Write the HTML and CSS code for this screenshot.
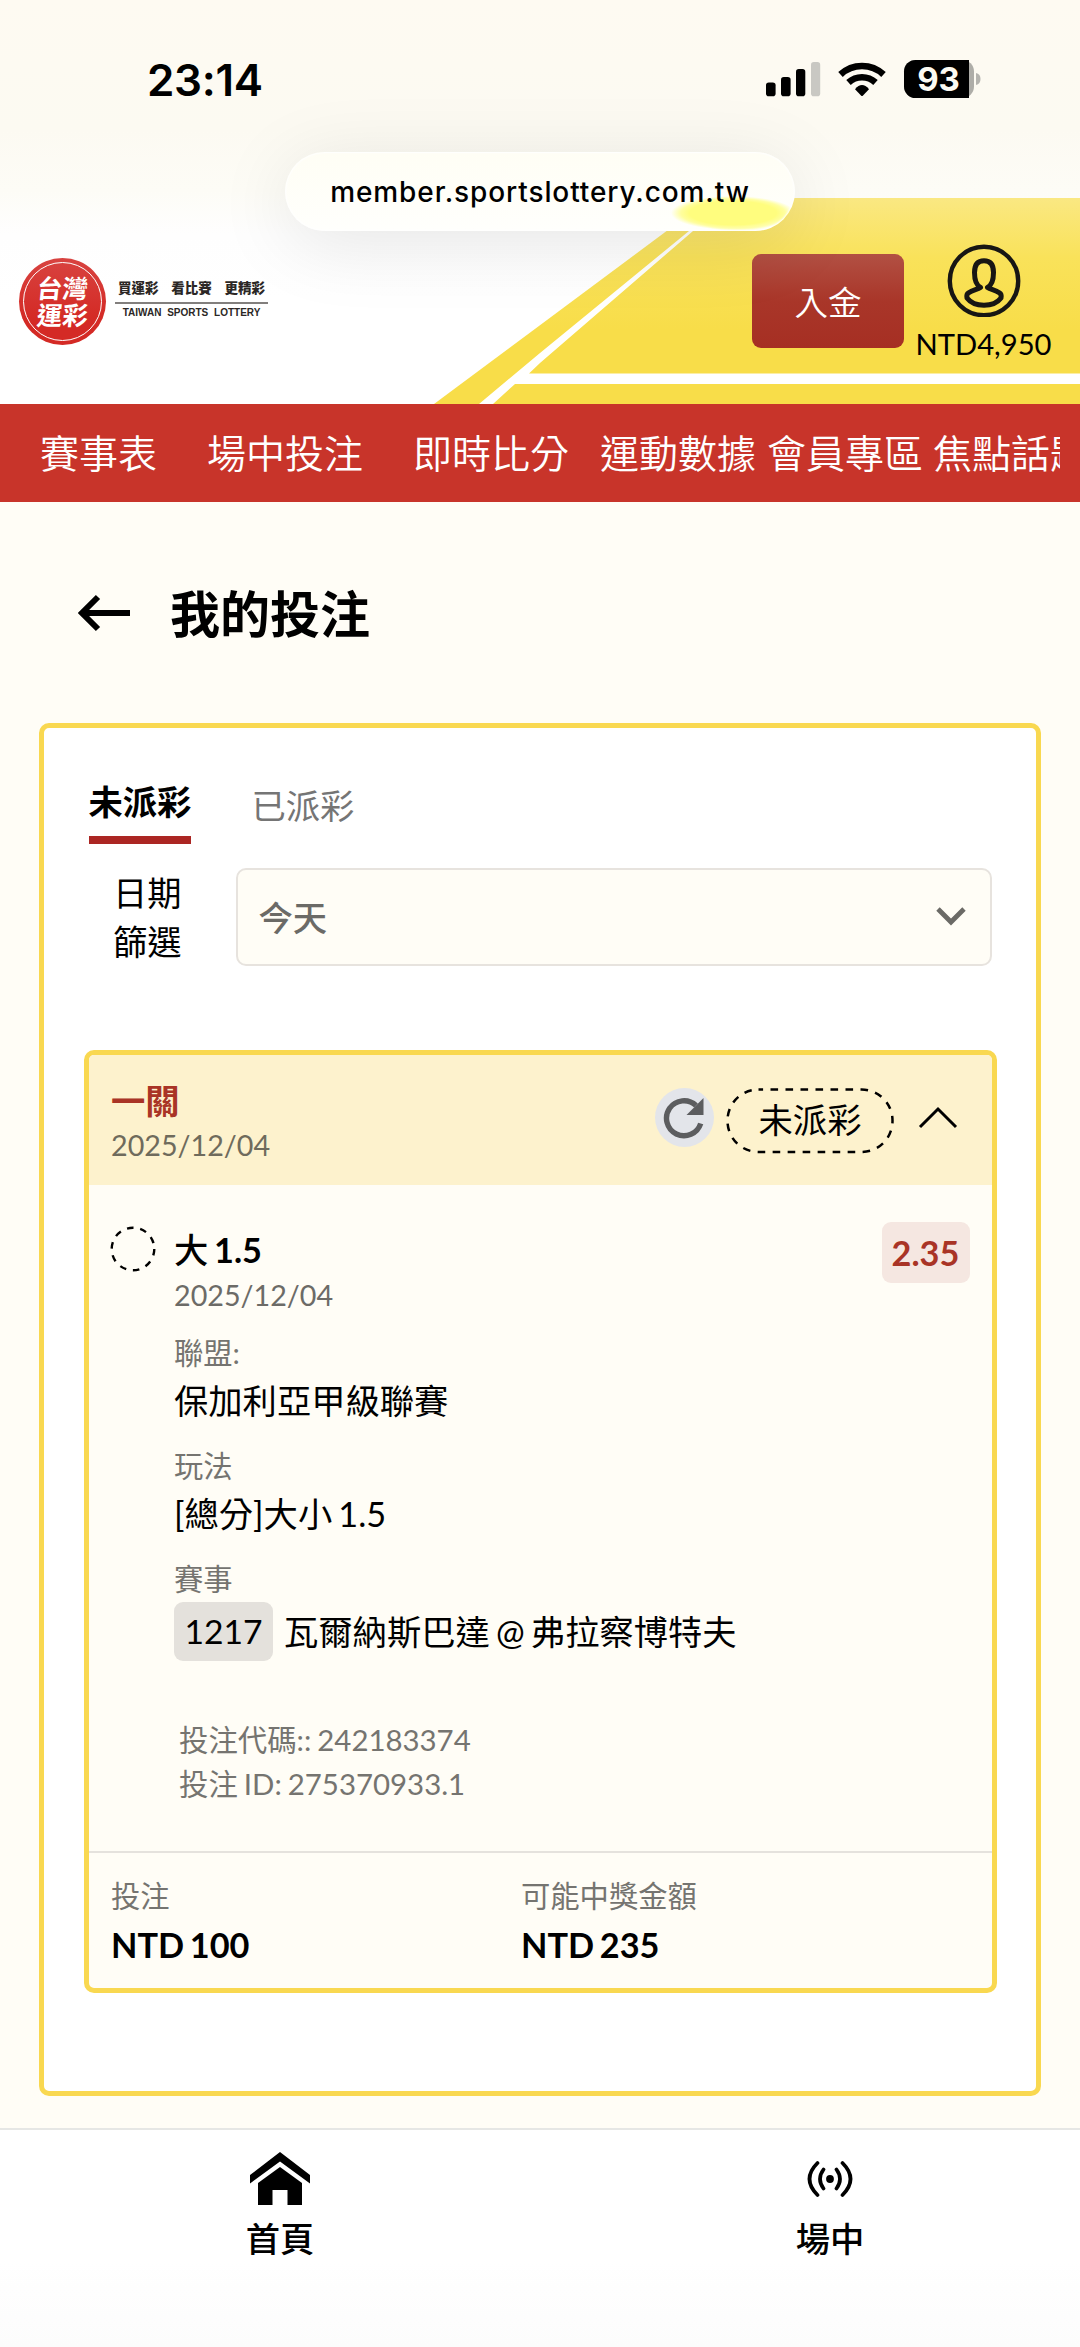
FILE: index.html
```html
<!DOCTYPE html>
<html lang="zh-Hant">
<head>
<meta charset="utf-8">
<title>我的投注</title>
<link rel="stylesheet" href="styles.css">
</head>
<body>
<header class="top">
  <svg class="top-art" width="1080" height="404" viewBox="0 0 1080 404">
    <defs>
      <linearGradient id="gold" x1="0" y1="198" x2="0" y2="330" gradientUnits="userSpaceOnUse">
        <stop offset="0" stop-color="#fae882"/><stop offset=".45" stop-color="#f9e25a"/><stop offset="1" stop-color="#f8dd49"/>
      </linearGradient>
    </defs>
    <path fill="url(#gold)" d="M711 198H1080V404H434z"/>
    <path fill="#fff" d="M732 198L689 231L540 353L479 404H493L515 384H1080V373.500H529L540 363L693 231L735 198z"/>
  </svg>
  <div class="status">
    <span class="clock">23:14</span>
    <svg class="indicators" width="216" height="40" viewBox="766 59 216 40">
      <rect x="766" y="82.500" width="9.600" height="13.700" rx="2.800"/>
      <rect x="781" y="77" width="9.600" height="19.200" rx="2.800"/>
      <rect x="796" y="69" width="9.300" height="27.200" rx="2.800"/>
      <rect x="811" y="62" width="9.200" height="34.200" rx="2.800" fill="#c9c8c3"/>
      <g fill="none" stroke="#000" stroke-width="6.600">
        <path d="M840.500 74.500a31.500 31.500 0 0 1 43 0"/>
        <path d="M848.500 82.500a20 20 0 0 1 27 0"/>
      </g>
      <path d="M855 89.200Q862 81 869 89.200L863 95.400Q862 96.400 861 95.400z"/>
      <rect x="904" y="60" width="70" height="38" rx="11.500" fill="#aeada8"/>
      <path d="M915.500 60H969V98H915.500A11.500 11.500 0 0 1 904 86.500V71.500A11.500 11.500 0 0 1 915.500 60z"/>
      <path d="M976 73q4.500 1 4.500 6t-4.500 6z" fill="#b5b4af"/>
      <text class="battery" x="938.500" y="91.200" text-anchor="middle">93</text>
    </svg>
  </div>
  <div class="brand-row">
    <div class="brand">
      <div class="seal"><div class="seal-ring"><span>台灣</span><span>運彩</span></div></div>
      <div class="tagline">
        <div class="tag-zh"><span>買運彩</span><span>看比賽</span><span>更精彩</span></div>
        <div class="tag-en">TAIWAN SPORTS LOTTERY</div>
      </div>
    </div>
    <button class="deposit">入金</button>
    <div class="account">
      <svg width="74" height="73" viewBox="0 0 74 73" fill="none" stroke="#171614">
        <circle cx="37" cy="37" r="34.200" stroke-width="4.400"/>
        <path stroke-width="5" stroke-linejoin="round" d="M33.500 43.500C29 41 27.500 35 27.500 28.500C27.500 20 31 16.800 37 16.800S46.500 20 46.500 28.500C46.500 35 45 41 40.500 43.500C43.500 45.500 48 46 52.500 48.800C54.500 50 54.500 51.500 54 54C51 58 45 61.200 37 61.200S23 58 20 54C19.500 51.500 19.500 50 21.500 48.800C26 46 30.500 45.500 33.500 43.500z"/>
      </svg>
      <span>NTD4,950</span>
    </div>
  </div>
  <div class="url">member.sportslottery.com.tw</div>
</header>

<nav class="menu">
  <div class="menu-track">
    <a>賽事表</a><a>場中投注</a><a>即時比分</a><a>運動數據</a><a>會員專區</a><a>焦點話題</a>
  </div>
</nav>

<main>
  <div class="title-row">
    <svg width="54" height="38" viewBox="0 0 54 38" fill="none" stroke="#000" stroke-width="6"><path d="M21 3L5 19L21 35M5 19H53"/></svg>
    <h1>我的投注</h1>
  </div>

  <section class="panel">
    <div class="tabs"><span class="tab active">未派彩</span><span class="tab">已派彩</span></div>
    <div class="filter">
      <label>日期<br>篩選</label>
      <div class="select">
        <span>今天</span>
        <svg width="30" height="20" viewBox="0 0 30 20" fill="none" stroke="#6b6a66" stroke-width="4.800"><path d="M2 3L15 16L28 3"/></svg>
      </div>
    </div>

    <article class="slip">
      <div class="slip-head">
        <div class="slip-name"><strong>一關</strong><span class="date">2025/12/04</span></div>
        <div class="refresh">
          <svg width="42" height="42" viewBox="0 0 42 42"><path d="M37.700 26.500A17.500 17.500 0 1 1 33 8.500" fill="none" stroke="#5c5d5f" stroke-width="5.400"/><path d="M40.500 1V18H23.500z" fill="#5c5d5f"/></svg>
        </div>
        <svg class="status-pill" width="168" height="66" viewBox="0 0 168 66">
          <rect x="1.500" y="1.500" width="165" height="62.500" rx="31" fill="none" stroke="#000" stroke-width="2.500" stroke-dasharray="7.600 7.400" stroke-dashoffset="3"/>
          <text x="84" y="44.500" text-anchor="middle">未派彩</text>
        </svg>
        <svg class="toggle" width="40" height="24" viewBox="0 0 40 24" fill="none" stroke="#000" stroke-width="3"><path d="M2 21L20 3L38 21"/></svg>
      </div>
      <div class="slip-body">
        <svg class="pending" width="46" height="46" viewBox="0 0 46 46"><circle cx="23" cy="23" r="21.300" fill="none" stroke="#000" stroke-width="2.400" stroke-dasharray="6.600 6.780"/></svg>
        <div class="pick">
          <div class="pick-name"><span>大</span> 1.5</div>
          <div class="date">2025/12/04</div>
          <dl>
            <dt>聯盟:</dt><dd>保加利亞甲級聯賽</dd>
            <dt>玩法</dt><dd>[總分]大小 1.5</dd>
            <dt>賽事</dt><dd class="match"><span class="code">1217</span><span>瓦爾納斯巴達 @ 弗拉察博特夫</span></dd>
          </dl>
          <div class="meta"><div>投注代碼:: 242183374</div><div>投注 ID: 275370933.1</div></div>
        </div>
        <div class="odds">2.35</div>
      </div>
      <div class="slip-foot">
        <div><span>投注</span><strong>NTD 100</strong></div>
        <div><span>可能中獎金額</span><strong>NTD 235</strong></div>
      </div>
    </article>
  </section>
</main>

<footer class="tabbar">
  <div class="tabbar-item">
    <svg width="62" height="56" viewBox="0 0 62 56"><path d="M31 1L61 24V32.500L31 10.500L1 32.500V24z"/><path d="M31 16L53 32V54H38.500V39H23.500V54H9V32z"/></svg>
    <span>首頁</span>
  </div>
  <div class="tabbar-item">
    <svg width="62" height="56" viewBox="0 0 62 56"><circle cx="31" cy="28" r="3.900"/><g fill="none" stroke="#000" stroke-width="3.700" stroke-linecap="round"><path d="M24.500 18.500Q17.500 28 24.500 37.500M37.500 18.500Q44.500 28 37.500 37.500M18.500 12Q2.500 28 18.500 44M43.500 12Q59.500 28 43.500 44"/></g></svg>
    <span>場中</span>
  </div>
</footer>
</body>
</html>
```
FILE: styles.css
```css
* { box-sizing: border-box; }
body {
  margin: 0;
  width: 1080px;
  height: 2347px;
  overflow: hidden;
  background: #fffdf6;
  color: #000;
  font-family: Lato, "Noto Sans CJK TC", sans-serif;
  font-size: 34.3px;
  word-spacing: -2.600px;
}
svg { display: block; flex: none; }

.top {
  position: relative;
  height: 404px;
  background: linear-gradient(#fefaf2 0, #fcfaf2 130px, #fdfcf6 190px, #fefefe 235px, #fff 300px);
}
.top-art { position: absolute; inset: 0; }
.status {
  position: relative;
  display: flex;
  justify-content: space-between;
  align-items: flex-start;
  height: 244px;
  padding: 59px 98px 0 147px;
}
.clock {
  font: 600 44px/42px Inter, sans-serif;
  letter-spacing: -.3px;
}
.battery { font: 700 33px Inter, sans-serif; fill: #fcfaf2; }
.brand-row {
  position: relative;
  display: flex;
  align-items: flex-start;
  padding-left: 19px;
}
.brand { display: flex; width: 733px; padding-top: 14px; }
.seal {
  width: 87px;
  height: 87px;
  padding: 4px;
  border-radius: 50%;
  background: linear-gradient(#d84340, #d42a25 70%);
}
.seal-ring {
  height: 100%;
  padding-top: 12px;
  border: 1.500px solid #fff;
  border-radius: 50%;
  color: #fff;
  font-size: 25.500px;
  font-weight: 700;
  line-height: 27px;
  text-align: center;
}
.seal-ring span { display: block; transform: skewX(-6deg); }
.tagline { width: 153px; margin: 22px 0 0 9px; color: #2b2725; }
.tag-zh {
  display: flex;
  justify-content: space-between;
  padding: 0 3px 5px;
  border-bottom: 2px solid #827f7d;
  font-size: 13.500px;
  font-weight: 900;
  line-height: 17px;
}
.tag-en {
  font: 700 10px/17px "Liberation Sans", sans-serif;
  word-spacing: 3px;
  text-align: center;
  white-space: nowrap;
}
.deposit {
  width: 152px;
  height: 94px;
  margin-top: 10px;
  padding: 0;
  border: 0;
  border-radius: 9px;
  background: linear-gradient(#b25043, #a93629 50%, #a62f23);
  color: #fff;
  font: 350 33.500px/92px "Noto Sans CJK TC", sans-serif;
}
.account {
  display: flex;
  flex-direction: column;
  align-items: center;
  width: 159px;
  font-size: 29.2px;
  line-height: 36px;
}
.account span { margin-top: 9px; white-space: nowrap; }
.url {
  position: absolute;
  left: 285px;
  top: 152px;
  width: 510px;
  height: 79px;
  border-radius: 40px;
  background:
    radial-gradient(ellipse 62px 17px at 448px 61px, #fffd7e 0 70%, #fffe9e 84%, transparent),
    radial-gradient(ellipse 46px 16px at 454px 64px, #fffd7e 60%, transparent),
    linear-gradient(#fffef5, #fffffc);
  box-shadow: 0 12px 76px rgba(0, 0, 0, .1), inset 0 0 2px 1px #fff;
  font: 500 28px/80px Inter, sans-serif;
  letter-spacing: .9px;
  text-align: center;
}

.menu { height: 98px; padding: 0 20px 0 40px; background: #c8342a; }
.menu-track {
  display: grid;
  grid-template-columns: 167px 206px 187px 167px 166px 160px;
  overflow: hidden;
  color: #fff;
  font: 350 39px/94px "Noto Sans CJK TC", sans-serif;
  white-space: nowrap;
}

.title-row { display: flex; align-items: center; height: 221px; padding: 0 77px; gap: 39px; }
h1 { margin: 2px 0 0; font-size: 50px; font-weight: 700; line-height: 60px; }

.panel {
  height: 1373px;
  margin: 0 39px;
  padding: 0 39.500px;
  border: 5px solid #f9d850;
  border-radius: 10px;
  background: #fff;
}
.tabs { display: flex; height: 140px; gap: 60px; padding: 52px 5px 0; }
.tab { height: 64px; line-height: 52px; color: #757575; }
.active { border-bottom: 8px solid #ab2623; color: #000; font-weight: 700; line-height: 44px; }
.filter { display: flex; width: 908px; justify-content: space-between; }
label { width: 98px; line-height: 49px; text-align: right; }
.select {
  display: flex;
  align-items: center;
  justify-content: space-between;
  width: 756px;
  height: 98px;
  padding: 0 24px 2px 21px;
  border: 2px solid #e7e3de;
  border-radius: 10px;
  background: #fffdf6;
  color: #6b6a66;
  font-weight: 500;
}

.slip {
  height: 943px;
  margin-top: 84px;
  border: 5px solid #f9d850;
  border-radius: 10px;
  background: #fffdf6;
  overflow: hidden;
}
.slip-head {
  display: flex;
  height: 130px;
  padding: 33px 34px 0 22.500px;
  background: #fdf2cd;
}
.slip-name { flex: 1; }
.slip-name strong { display: block; color: #a93426; line-height: 26px; }
.date { display: block; color: #6c6b67; font-size: 28.700px; line-height: 36px; }
.slip-name .date { margin-top: 13px; color: #6f6b5c; }
.refresh {
  display: grid;
  place-items: center;
  width: 59px;
  height: 59px;
  margin-right: 12px;
  border-radius: 50%;
  background: #e3e5ea;
}
.toggle { margin: 18px 0 0 24px; }
.slip-body { display: flex; height: 666px; padding: 37px 22px 0 21.500px; }
.pending { margin-top: 4px; }
.pick { flex: 1; padding-left: 18px; }
.pick-name { height: 55px; padding-top: 6px; font-weight: 700; line-height: 44px; }
.pick-name span { font-weight: 500; }
dl { margin: 0; }
dt { margin-top: 18px; color: #757470; font-size: 29.3px; line-height: 44px; }
dd { margin: 1px 0 0; line-height: 50px; }
dd.match { display: flex; align-items: center; gap: 11px; height: 59px; margin-top: 1px; white-space: nowrap; }
.code { width: 99px; border-radius: 9px; background: #e4e1dc; font-size: 33.700px; line-height: 59px; text-align: center; }
.meta { margin-top: 57px; padding-left: 5px; color: #757470; font-size: 29.4px; line-height: 44px; word-spacing: -1.500px; white-space: nowrap; }
.odds {
  width: 88px;
  height: 61px;
  border-radius: 9px;
  background: #f5e7e1;
  color: #a93426;
  font-weight: 700;
  line-height: 62px;
  text-align: center;
}
.slip-foot {
  display: grid;
  grid-template-columns: 410px 1fr;
  height: 137px;
  padding: 22px 22.500px;
  border-top: 2.500px solid #e5e2dd;
}
.slip-foot span { display: block; color: #757470; font-size: 29.3px; line-height: 42px; }
.slip-foot strong { display: block; margin-top: 5px; line-height: 46px; }

.tabbar {
  display: grid;
  grid-template-columns: 560px 540px;
  height: 219px;
  margin-top: 32px;
  padding-top: 21px;
  border-top: 2.500px solid #e6e7e5;
  background: linear-gradient(#fff 60%, #fcfcfc);
  overflow: hidden;
}
.tabbar-item { display: flex; flex-direction: column; align-items: center; font-weight: 500; line-height: 44px; }
.tabbar-item span { margin-top: 10px; }
```
